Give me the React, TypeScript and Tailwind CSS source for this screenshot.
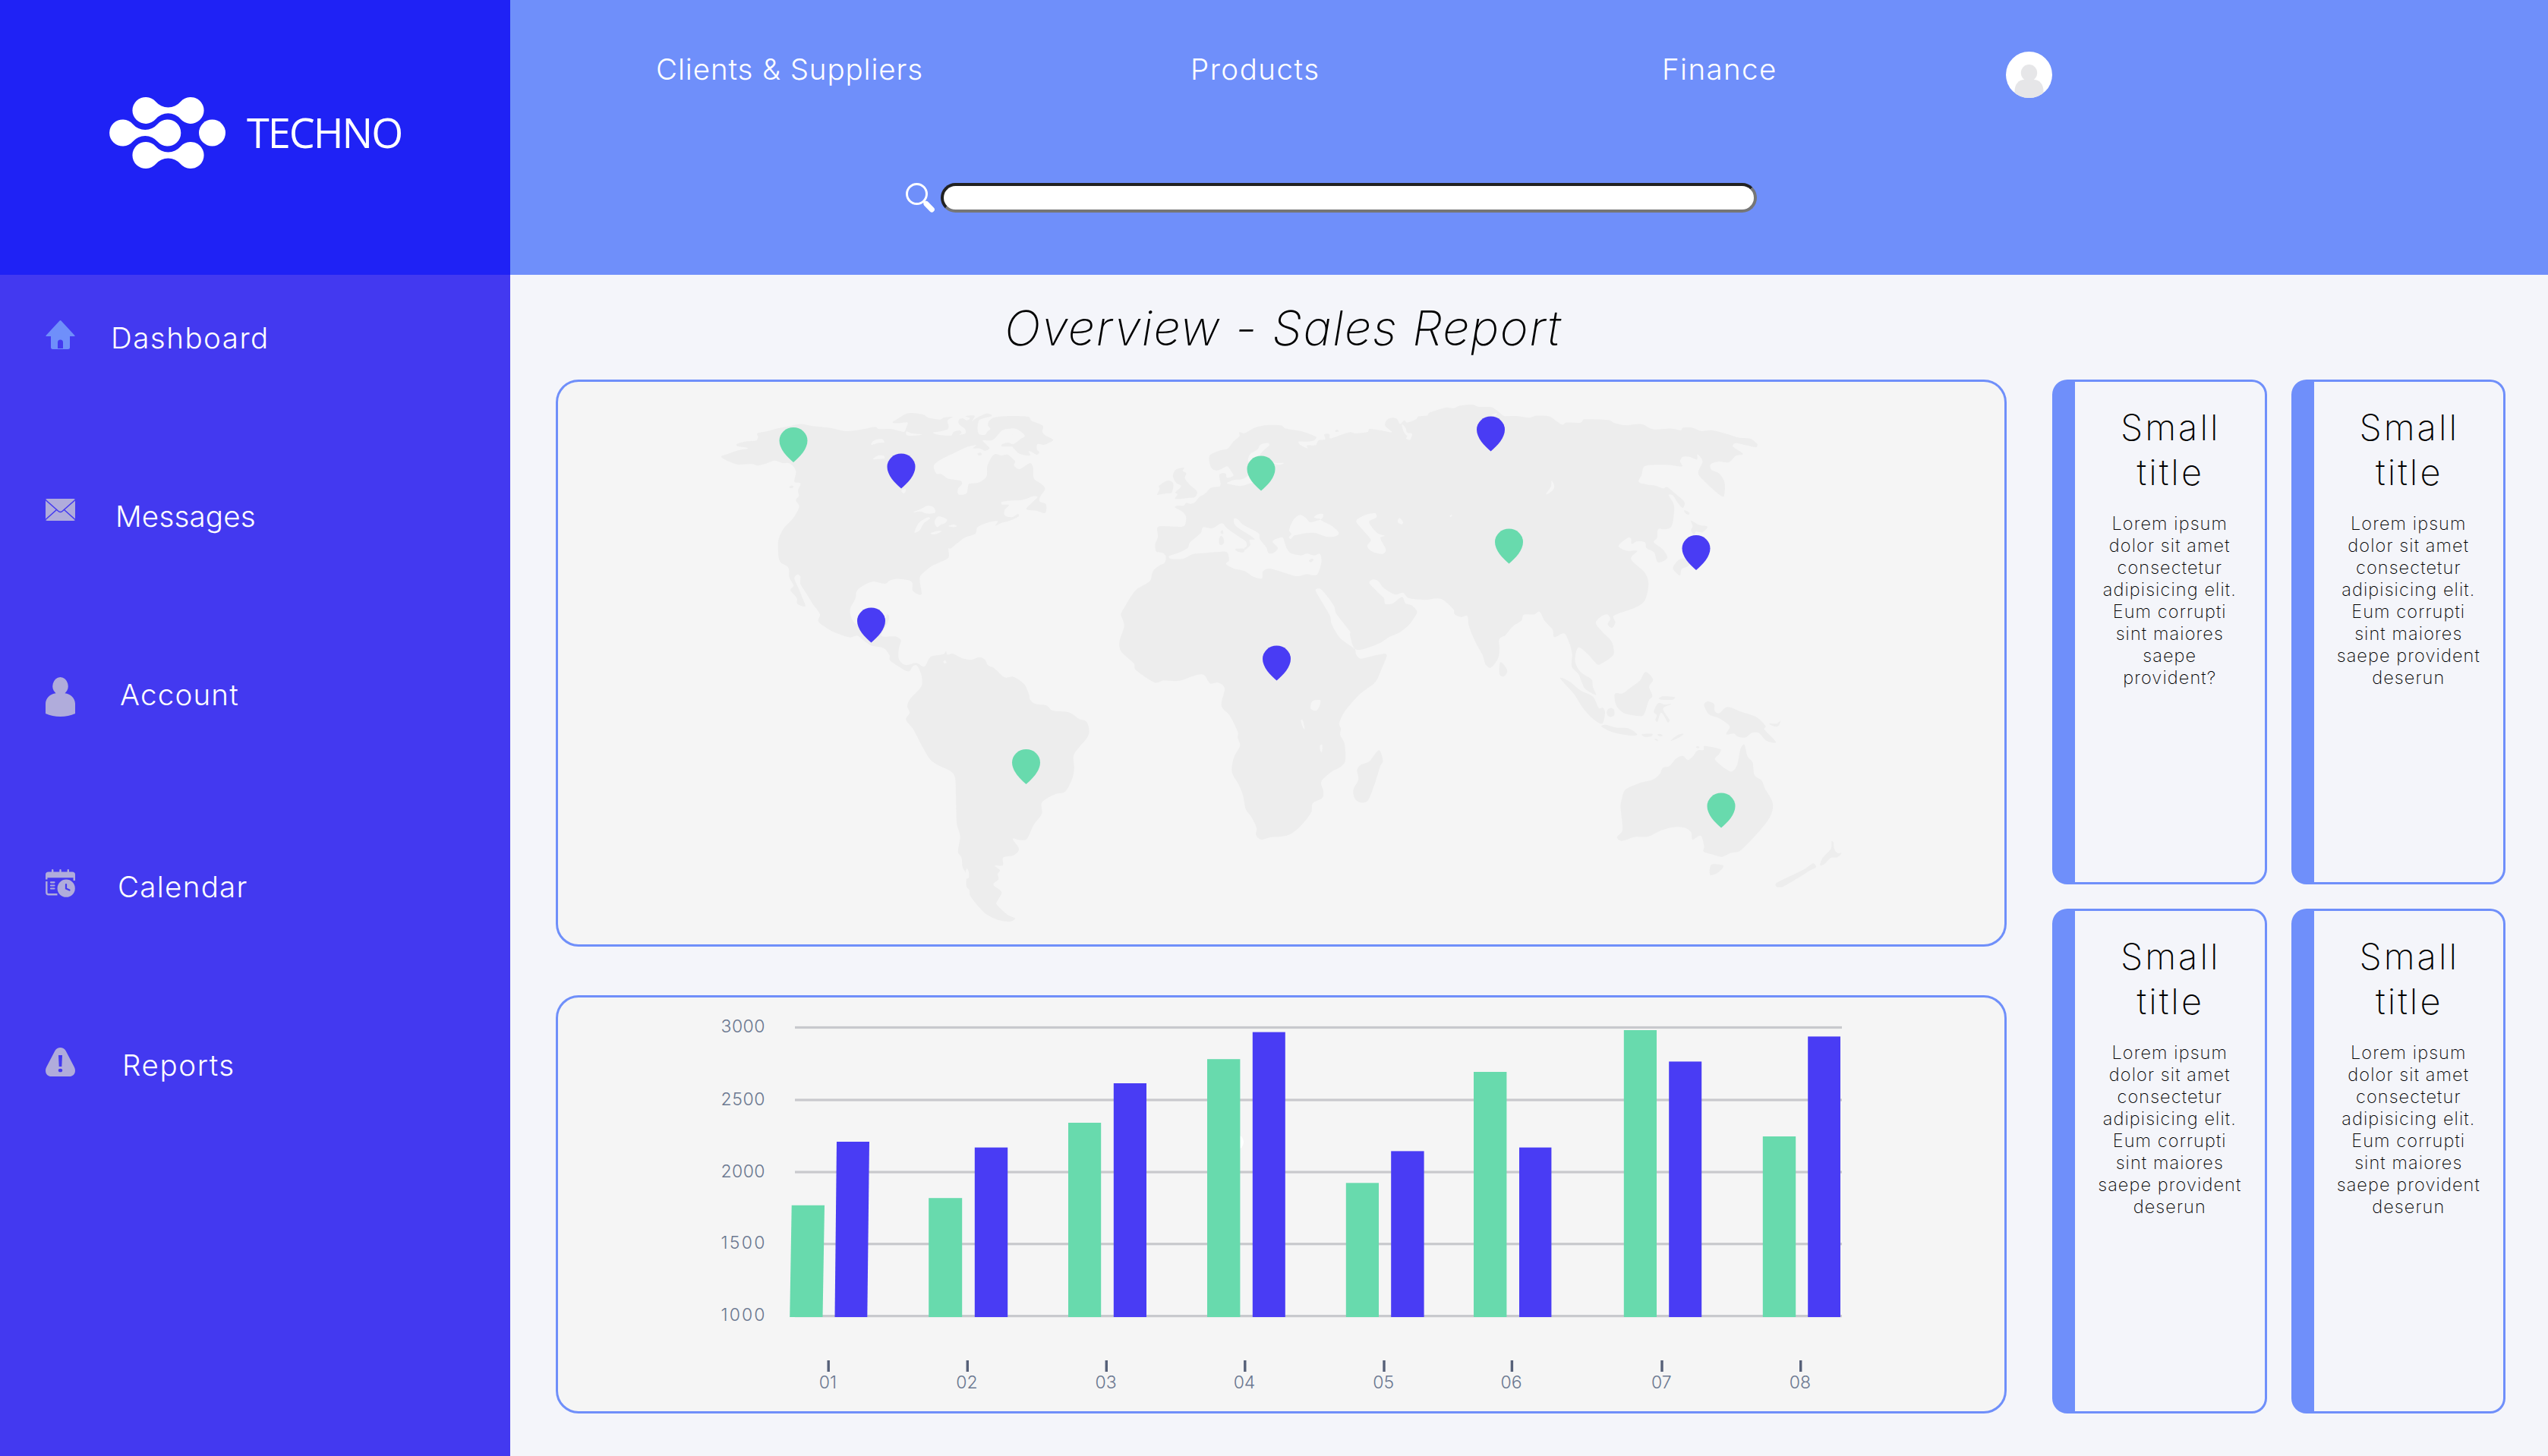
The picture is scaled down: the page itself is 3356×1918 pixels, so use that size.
type Pt = [number, number];

/** Turns a flat "x,y x,y" list into a closed, softly rounded outline. */
function outline(src: string): string {
  const p = src.trim().split(/\s+/).map((s) => s.split(",").map(Number) as Pt);
  const n = p.length;
  const f = (v: number) => v.toFixed(1);
  // Control vector parallel to from→to, never longer than a third of the segment.
  const handle = (from: Pt, to: Pt, seg: number): Pt => {
    const dx = to[0] - from[0];
    const dy = to[1] - from[1];
    const len = Math.hypot(dx, dy) || 1;
    const m = Math.min(len * 0.16, seg * 0.33) / len;
    return [dx * m, dy * m];
  };
  let d = `M${p[0][0]} ${p[0][1]}`;
  for (let i = 0; i < n; i++) {
    const a = p[(i - 1 + n) % n];
    const b = p[i];
    const c = p[(i + 1) % n];
    const e = p[(i + 2) % n];
    const seg = Math.hypot(c[0] - b[0], c[1] - b[1]);
    if (seg > 400) {
      d += `L${c[0]} ${c[1]}`;
      continue;
    }
    const longBefore = Math.hypot(b[0] - a[0], b[1] - a[1]) > 400;
    const longAfter = Math.hypot(e[0] - c[0], e[1] - c[1]) > 400;
    const h1 = longBefore ? ([0, 0] as Pt) : handle(a, c, seg);
    const h2 = longAfter ? ([0, 0] as Pt) : handle(b, e, seg);
    d += `C${f(b[0] + h1[0])} ${f(b[1] + h1[1])} ${f(c[0] - h2[0])} ${f(c[1] - h2[1])} ${c[0]} ${c[1]}`;
  }
  return d + "Z";
}

type Region = { transform: string; land: string[]; water: string[]; isles: string[] };

const REGIONS: Region[] = [
  {
    transform: "translate(900 500) scale(.3954 .4719)",
    land: [
      "126,215 150,207 180,198 215,193 212,190 180,186 178,180 205,173 243,170 249,160 246,150 280,144 315,136 350,131 390,124 430,130 490,135 540,144 590,140 640,132 650,138 690,138 735,146 742,135 747,120 720,122 697,120 710,112 750,94 800,98 815,106 855,112 868,106 897,104 880,114 884,130 880,139 860,144 832,148 850,154 893,156 900,146 920,142 927,148 920,154 940,150 938,138 918,124 918,112 930,108 945,114 955,108 940,102 970,101 962,116 975,108 1010,95 1028,101 1000,108 985,114 980,135 985,152 1005,154 1013,145 1023,138 1015,128 1018,116 1035,106 1075,102 1150,104 1160,115 1198,129 1196,145 1205,155 1232,168 1215,178 1200,182 1180,180 1178,195 1186,203 1178,210 1160,202 1150,200 1155,212 1120,207 1100,192 1095,187 1062,187 1060,182 1080,176 1100,180 1125,165 1137,156 1110,138 1085,137 1062,142 1040,162 1025,170 997,170 1010,182 1020,192 1005,199 985,192 965,192 975,183 940,190 900,206 860,222 835,240 843,262 860,264 880,276 925,283 928,292 915,305 916,320 935,321 945,315 950,293 960,290 985,287 1010,270 1013,240 1035,209 1060,212 1080,210 1105,228 1102,240 1120,250 1155,233 1165,245 1168,276 1190,290 1205,305 1190,325 1187,340 1208,348 1206,372 1180,367 1143,362 1160,345 1180,328 1165,326 1130,336 1090,338 1060,342 1062,349 1085,350 1070,365 1072,380 1095,384 1115,375 1117,382 1090,393 1060,400 1040,408 1047,395 1020,398 980,412 973,430 940,440 915,455 890,472 883,472 883,497 850,512 825,522 790,548 788,565 793,600 765,590 763,568 750,560 715,556 690,560 672,570 630,564 600,575 578,590 573,612 556,640 560,665 575,683 620,700 655,695 668,690 675,665 680,655 686,662 680,680 660,715 705,717 725,728 718,750 718,780 740,797 775,791 803,801 822,775 845,770 868,766 875,758 880,768 897,765 930,778 960,782 985,775 1005,782 1015,798 1035,805 1070,831 1100,830 1135,850 1152,880 1155,893 1172,905 1210,910 1230,924 1285,929 1320,948 1343,955 1352,980 1345,1000 1320,1025 1300,1050 1302,1085 1295,1115 1272,1150 1240,1157 1195,1180 1194,1212 1168,1242 1145,1282 1125,1286 1097,1282 1118,1310 1100,1328 1066,1334 1064,1356 1038,1357 1055,1370 1047,1380 1050,1395 1033,1410 1060,1430 1050,1450 1043,1464 1080,1494 1105,1504 1090,1513 1050,1509 1010,1493 985,1473 955,1440 953,1425 943,1415 942,1382 930,1360 927,1335 915,1318 922,1275 911,1240 908,1160 905,1110 890,1093 845,1075 820,1058 790,1015 765,975 742,950 754,930 746,912 755,892 793,856 793,825 778,798 765,800 750,815 715,800 688,783 687,770 668,750 625,742 600,728 580,715 555,720 510,708 480,695 450,675 455,655 430,625 410,597 390,570 390,550 380,544 370,555 385,585 397,610 406,633 380,626 378,610 357,588 367,575 353,552 350,525 322,508 316,480 317,447 335,415 365,388 386,355 375,337 385,325 382,310 390,290 370,285 375,255 355,234 330,233 305,226 280,233 248,240 230,236 180,237 150,228",
    ],
    water: [
      "626,182 635,170 660,166 670,175 650,177",
      "632,222 650,212 668,213 670,220 650,222",
      "743,145 760,150 795,153 780,156 745,156",
      "766,370 790,362 815,352 835,358 838,372 810,374 790,368",
      "770,427 785,400 815,384 822,388 800,402 788,420",
      "837,397 850,382 878,390 873,400 858,405 845,412",
      "883,409 900,405 911,409 900,412",
      "823,430 845,423 862,423 840,432",
      "726,310 740,305 740,313 733,318",
      "866,788 872,784 877,790 870,792",
      "1095,156 1105,151 1113,155 1105,160",
      "938,1385 944,1365 951,1375 951,1390 943,1393",
    ],
    isles: ["352,301 360,296 368,298 362,303", "980,207 990,204 994,210 985,212"],
  },
  {
    transform: "translate(1440 500) scale(.3827 .4719)",
    land: [
      "281,357 290,352 312,352 320,344 335,347 350,342 365,328 385,318 405,302 435,298 438,290 434,265 455,262 460,274 480,270 482,266 468,248 460,242 425,254 405,245 400,213 435,198 463,193 480,175 503,158 503,147 520,150 560,133 600,127 648,128 660,136 720,145 767,160 760,170 735,173 707,173 712,182 738,192 735,184 765,183 775,170 798,167 795,153 812,152 815,164 850,155 885,147 900,150 945,146 950,138 990,142 1028,147 1005,130 1008,115 1025,107 1045,110 1056,124 1070,114 1080,120 1112,110 1118,103 1150,100 1155,93 1215,78 1240,80 1260,73 1305,70 1325,76 1370,77 1392,88 1415,102 1450,102 1490,108 1525,102 1568,104 1568,678 1555,668 1535,648 1515,654 1480,656 1472,670 1440,690 1420,712 1397,725 1398,750 1393,778 1368,804 1350,795 1340,770 1320,740 1305,715 1292,685 1287,660 1265,663 1243,655 1240,642 1195,612 1140,615 1085,610 1065,595 1040,600 1000,582 980,562 962,558 950,568 975,590 1000,610 1005,626 1030,625 1062,607 1075,625 1095,630 1114,648 1100,670 1080,690 1050,708 1020,718 980,738 905,754 883,712 885,705 835,652 830,635 805,605 780,584 765,588 790,625 815,660 820,682 850,722 900,752 905,768 920,779 960,772 1005,765 1010,772 990,812 970,845 915,880 865,927 846,960 852,975 850,992 865,1018 867,1065 850,1082 820,1095 785,1122 792,1150 788,1168 755,1183 750,1208 715,1245 670,1272 610,1278 578,1284 560,1272 562,1252 545,1222 525,1200 515,1160 500,1130 477,1095 484,1055 505,1022 497,1000 498,985 470,938 441,910 452,862 430,846 402,848 380,824 350,826 295,841 240,840 212,846 145,810 140,793 95,758 90,732 106,690 102,672 95,655 110,632 130,605 150,585 195,562 205,535 225,520 245,512 250,495 240,484 217,480 213,460 222,440 220,415 230,409 305,411 316,405 319,382 305,368",
      "280,255 290,249 312,246 308,255 320,262 315,275 330,292 357,313 350,328 330,330 282,333 290,320 282,315 302,298 285,288 274,270",
      "220,320 228,305 225,298 255,282 275,290 270,315 250,318 222,322",
      "985,1035 997,1065 988,1078 970,1125 945,1175 920,1181 900,1170 895,1145 912,1117 908,1090 920,1076 950,1066 965,1050",
      "1400,790 1415,798 1425,815 1412,829 1398,822",
      "832,144 838,140 845,144 838,146",
    ],
    water: [
      "260,493 290,485 325,470 332,455 370,428 378,412 410,415 442,401 460,415 500,438 525,452 528,465 520,470 523,475 540,462 538,448 555,446 545,438 500,415 485,402 485,388 497,390 515,405 570,430 573,445 595,468 603,484 620,484 635,470 617,452 640,442 653,442 665,470 680,485 715,491 735,486 760,491 780,487 785,510 772,543 755,546 735,543 700,549 660,540 620,530 600,528 583,536 580,555 550,550 520,534 485,528 457,515 467,505 460,482 430,481 370,485 340,488 310,500 265,500",
      "674,420 690,390 710,378 730,385 745,398 765,395 783,390 760,385 770,377 790,375 790,385 783,392 820,408 845,428 830,438 800,438 760,428 715,431 690,436 680,445 673,440 682,432",
      "905,395 935,378 970,373 974,385 950,395 955,408 980,430 1003,436 988,443 1007,475 995,487 960,480 943,465 955,447 930,422",
      "1048,392 1056,387 1066,398 1062,404 1050,400",
      "1227,380 1235,378 1230,384",
      "532,225 540,208 565,195 575,182 600,177 606,183 590,195 575,208 575,218 620,232 655,233 640,238 620,237 600,250 560,285 540,290 505,297 460,290 465,286 485,280 510,278 530,270 545,255 540,235",
      "1062,125 1075,135 1080,148 1097,152 1090,168 1077,165 1080,158 1068,145",
      "1370,100 1388,94 1385,100",
      "748,910 755,897 780,895 780,908 768,924 750,920",
      "714,952 720,950 728,975 722,972",
      "780,1022 788,1020 787,1040 781,1035",
    ],
    isles: [
      "433,445 440,436 449,445 448,458 435,461",
      "438,425 445,420 447,430 440,430",
      "488,473 520,472 517,482 500,481",
      "742,506 752,500 758,503 750,510",
    ],
  },
  {
    transform: "translate(1980 500) scale(.4337 .4847)",
    land: [
      "0,100 40,99 80,104 100,98 140,100 160,112 180,123 190,117 235,117 245,108 320,110 335,117 370,124 420,121 455,135 510,133 540,138 545,131 575,131 600,140 635,138 680,148 715,158 750,161 771,175 768,184 735,178 705,173 697,182 728,202 705,208 685,225 655,223 630,230 632,245 655,255 672,280 670,317 655,312 615,280 592,255 605,222 590,203 588,217 565,210 545,210 537,222 543,236 500,232 430,235 420,260 411,278 435,285 460,288 485,296 497,292 520,308 550,333 545,349 530,335 515,315 502,314 518,340 517,375 510,400 490,407 470,407 467,430 457,442 485,462 498,485 470,497 458,470 435,458 430,442 405,440 390,447 388,432 378,430 350,452 375,465 407,466 388,488 430,525 441,555 430,600 400,620 335,642 340,660 330,675 317,665 325,650 315,638 295,645 281,662 300,685 325,707 334,725 333,750 290,775 275,765 255,745 228,728 218,765 235,795 268,815 272,835 281,857 250,842 238,822 228,800 208,780 209,745 200,715 185,690 155,700 150,680 125,655 110,630 95,638 62,639 55,655 30,670 10,690 0,697",
      "550,355 565,362 562,368 552,362",
      "570,383 595,395 620,400 605,415 585,413 580,422 570,410 575,398",
      "515,512 530,492 548,486 565,500 560,508 542,515 537,532 525,525",
      "173,812 200,820 235,845 272,862 290,893 302,892 309,905 300,935 270,920 240,890 215,855",
      "298,943 310,938 345,946 380,948 407,965 380,967 330,958",
      "314,905 318,896 326,893 335,896 338,905 335,914 326,917 318,914",
      "338,855 345,852 362,853 385,838 415,818 432,795 455,815 443,835 453,860 442,872 430,905 420,915 370,908 350,895 340,878",
      "470,880 490,883 510,882 485,895 505,925 500,932 480,905 468,930 462,925 466,912 457,903",
      "472,866 485,861 521,863 515,870 480,870",
      "421,964 453,963 450,969 430,971",
      "468,965 476,963 484,967 476,970",
      "508,982 530,966 548,963 535,972",
      "458,977 466,977 470,983",
      "585,999 591,996 596,1000 590,1002",
      "610,885 620,875 640,882 642,900 655,907 680,890 720,902 770,918 797,942 792,950 828,985 800,982 775,960 755,960 735,973 712,970 700,962 677,964 688,945 680,935 655,920 625,910",
      "808,935 830,935 842,928 835,942 820,942",
      "345,1244 362,1225 356,1160 360,1140 370,1115 410,1098 455,1087 475,1072 485,1055 505,1050 525,1030 545,1023 560,1034 575,1025 590,1008 608,1007 610,996 660,1005 655,1018 643,1033 690,1065 710,1048 720,1005 732,992 742,1025 757,1040 763,1075 785,1090 795,1112 818,1150 812,1185 780,1225 720,1280 690,1287 665,1297 640,1292 608,1283 610,1270 600,1240 575,1250 570,1230 550,1218 520,1216 480,1225 440,1242 400,1243 360,1254",
      "627,1330 635,1317 668,1321 655,1338 630,1347",
      "827,1370 870,1350 915,1330 940,1315 950,1325 930,1335 900,1352 850,1378 832,1379",
      "962,1320 970,1300 995,1275 997,1255 1003,1258 1005,1275 1015,1287 1027,1287 1015,1298 995,1300 975,1317",
    ],
    water: ["130,312 145,290 147,275 155,290 148,303"],
    isles: [],
  },
];

const GREEN = "#68daad";
const VIOLET = "#493cf4";

const PINS: [number, number, string][] = [
  [1045, 609, GREEN],
  [1187, 643.5, VIOLET],
  [1147.5, 846.5, VIOLET],
  [1351.5, 1033, GREEN],
  [1661, 646.5, GREEN],
  [1963.5, 594.5, VIOLET],
  [1987.5, 742.5, GREEN],
  [1681.5, 896.5, VIOLET],
  [2234, 751, VIOLET],
  [2267, 1090.5, GREEN],
];

function WorldMap() {
  return (
    <svg viewBox="735 503 1905 741" className="block h-full w-full">
      {REGIONS.map((r, i) => (
        <g key={i} transform={r.transform}>
          <path d={r.land.map(outline).join("")} fill="#ededed" />
          <path d={r.water.map(outline).join("")} fill="#f5f5f5" />
          <path d={r.isles.map(outline).join("")} fill="#ededed" />
        </g>
      ))}
      {PINS.map(([x, y, c]) => (
        <path
          key={`${x}`}
          transform={`translate(${x} ${y})`}
          d="M0 0C-9-7.500-18.500-18-18.500-28.500A18.500 17.500 0 0 1 18.500-28.500C18.500-18 9-7.500 0 0Z"
          fill={c}
        />
      ))}
    </svg>
  );
}

const BARS: [number, number, number, string][] = [
  [1223.2, 1267.2, 1578.2, GREEN],
  [1283.8, 1327.2, 1511.6, VIOLET],
  [1407, 1450.2, 1479, GREEN],
  [1466.8, 1510, 1427, VIOLET],
  [1590, 1633.4, 1395.2, GREEN],
  [1649.8, 1692.8, 1359.6, VIOLET],
  [1772.8, 1816, 1558.3, GREEN],
  [1832.2, 1875.6, 1516.4, VIOLET],
  [1941, 1984.4, 1412, GREEN],
  [2001, 2043.4, 1511.6, VIOLET],
  [2138.8, 2182, 1357, GREEN],
  [2198.2, 2241.2, 1398.4, VIOLET],
  [2321.8, 2365.2, 1497, GREEN],
  [2381.2, 2424, 1365.4, VIOLET],
];

const LEVELS: [string, number][] = [
  ["3000", 1353.5],
  ["2500", 1449],
  ["2000", 1544],
  ["1500", 1638.7],
  ["1000", 1733.6],
];

const TICKS: [string, number][] = [
  ["01", 1091.2],
  ["02", 1274.3],
  ["03", 1457.3],
  ["04", 1639.8],
  ["05", 1823],
  ["06", 1991.4],
  ["07", 2189],
  ["08", 2371.7],
];

function SalesChart() {
  return (
    <svg viewBox="735 1314 1905 545" className="block h-full w-full">
      {LEVELS.map(([t, y]) => (
        <g key={t}>
          <rect x="1047" y={y - 1.6} width="1379" height="3.2" fill="#c8c9cd" />
          <text x="949.5" y={y + 6.7} fontSize="23" fontWeight="350" textLength="58" fill="#6b7890" fontFamily="Inter, sans-serif">
            {t}
          </text>
        </g>
      ))}
      <ellipse cx="1630" cy="1504.500" rx="8" ry="9.500" fill="#fff" />
      <path d="M1042.700 1587.700H1086L1083.500 1735H1040.200Z" fill={GREEN} />
      <path d="M1102 1504H1145L1142.300 1735H1099.500Z" fill={VIOLET} />
      {BARS.map(([l, r, t, c]) => (
        <rect key={l} x={l} y={t} width={r - l} height={1735 - t} fill={c} />
      ))}
      {TICKS.map(([t, x]) => (
        <g key={t}>
          <rect x={x - 1.7} y="1792" width="3.400" height="15" fill="#566078" />
          <text x={x - 0.8} y="1829" fontSize="23" fontWeight="350" textAnchor="middle" fill="#6b7890" fontFamily="Inter, sans-serif">
            {t}
          </text>
        </g>
      ))}
    </svg>
  );
}

const DUMBBELL =
  "M13.200-11.400A21.500 21.500 0 0 0 45.800-11.400A17.500 17.500 0 1 1 45.800 11.400A21.500 21.500 0 0 0 13.200 11.400A17.500 17.500 0 1 1 13.200-11.400Z";

function Logo() {
  return (
    <svg viewBox="144 127 154 96" className="h-[96px] w-[154px]" fill="#fff">
      <path d={DUMBBELL} transform="translate(192 145.400)" />
      <path d={DUMBBELL} transform="translate(161.700 175)" />
      <path d={DUMBBELL} transform="translate(192 204.500)" />
      <circle cx="279.500" cy="175" r="17.500" />
    </svg>
  );
}

function HomeIcon() {
  return (
    <svg viewBox="0 0 39 38" className="h-[38px] w-[39px]" fill="#6f8ffa">
      <path
        d="M18.500.6Q19.500-.4 20.500.6L38.500 20Q39 21 38 21H32V35.500Q32 38 29.500 38H9.500Q7 38 7 35.500V21H1Q0 21 .5 20ZM16 37H23V29A3.500 3.500 0 0 0 16 29Z"
        fillRule="evenodd"
      />
    </svg>
  );
}

function MailIcon() {
  return (
    <svg viewBox="0 0 39 29" className="h-[29px] w-[39px]">
      <rect width="39" height="29" rx="2" fill="#b0acdb" />
      <path
        d="M0 1.500L17 16.500Q19.500 18.500 22 16.500L39 1.500M0 27.500L14.500 14.500M39 27.500L24.500 14.500"
        fill="none"
        stroke="#4339f0"
        strokeWidth="1.600"
      />
    </svg>
  );
}

function UserIcon() {
  return (
    <svg viewBox="0 0 39 52" className="h-[52px] w-[39px]" fill="#b0acdb">
      <path d="M19.500 0A11.500 12 0 0 1 25.500 21.200C33 22 39 28 39 35V48Q30 52 19.500 52T0 48V35C0 28 6 22 13.500 21.200A11.500 12 0 0 1 19.500 0Z" />
    </svg>
  );
}

function CalendarIcon() {
  return (
    <svg viewBox="0 0 39 37" className="h-[37px] w-[39px]">
      <path
        d="M0 13.500V7Q0 3.500 4 3.500H8V1.200A1.200 1.200 0 0 1 10.400 1.200V3.500H18.300V1.200A1.200 1.200 0 0 1 20.700 1.200V3.500H28.600V1.200A1.200 1.200 0 0 1 31 1.200V3.500H35Q39 3.500 39 7V15H36.500V11.300H2.500V13.500Z"
        fill="#b0acdb"
      />
      <path d="M1.300 16V30.500Q1.300 33.300 4 33.300H15.500" fill="none" stroke="#b0acdb" strokeWidth="2.400" />
      <path d="M7 17.300H11.500M7 21.500H11.500M7 25.500H11.500" fill="none" stroke="#b0acdb" strokeWidth="2.200" strokeLinecap="round" />
      <circle cx="27.200" cy="25.200" r="11.600" fill="#b0acdb" />
      <path d="M27 20V25.500L31.500 27.500" fill="none" stroke="#4339f0" strokeWidth="2.200" strokeLinecap="round" />
    </svg>
  );
}

function AlertIcon() {
  return (
    <svg viewBox="0 0 39 38" className="h-[38px] w-[39px]">
      <path d="M12.500 4C15.500-1.300 23.500-1.300 26.500 4L37.500 25C41 31.500 38 38 31 38H8C1 38-2 31.500 1.500 25Z" fill="#b0acdb" />
      <path d="M17 10H22L21.300 25H17.700Z" fill="#4339f0" />
      <ellipse cx="19.500" cy="30" rx="2.700" ry="2.300" fill="#4339f0" />
    </svg>
  );
}

const MENU = [
  { icon: <HomeIcon />, label: "Dashboard", box: "mt-[60px]", text: "ml-[47px] tracking-[1.5px]" },
  { icon: <MailIcon />, label: "Messages", box: "mt-[187px]", text: "ml-[53px] tracking-[0.2px]" },
  { icon: <UserIcon />, label: "Account", box: "mt-[187px]", text: "ml-[59px] tracking-[1.2px]" },
  { icon: <CalendarIcon />, label: "Calendar", box: "mt-[205px]", text: "ml-[56px] tracking-[1.3px]" },
  { icon: <AlertIcon />, label: "Reports", box: "mt-[187px]", text: "ml-[62px] tracking-[1.6px]" },
];

const SHORT = ["Lorem ipsum", "dolor sit amet", "consectetur", "adipisicing elit.", "Eum corrupti", "sint maiores"];
const CARDS = [
  [...SHORT, "saepe", "provident?"],
  [...SHORT, "saepe provident", "deserun"],
  [...SHORT, "saepe provident", "deserun"],
  [...SHORT, "saepe provident", "deserun"],
];

function InfoCard({ lines }: { lines: string[] }) {
  return (
    <article className="rounded-[20px] border-[3px] border-l-[30px] border-[#6f8ffa] pt-[30px] text-center text-black">
      <h2 className="pl-[2px] text-[47px] leading-[59px] font-extralight tracking-[3px]">
        Small
        <br />
        title
      </h2>
      <p className="mt-[24px] text-[23.5px] leading-[29px] font-[150] tracking-[1.1px]">
        {lines.map((l) => (
          <span key={l} className="block whitespace-nowrap">
            {l}
          </span>
        ))}
      </p>
    </article>
  );
}

export default function App() {
  return (
    <div className="flex h-[1918px] w-[3356px] overflow-hidden bg-[#f4f5fa] font-['Inter',sans-serif]">
      <aside className="flex w-[672px] shrink-0 flex-col bg-[#4339f0]">
        <div className="flex h-[362px] items-center bg-[#1f22f5] pb-[12px] pl-[144px]">
          <Logo />
          <span className="ml-[27px] pb-[2px] font-['Open_Sans',sans-serif] text-[54px] leading-[60px] tracking-[-2px] text-white">
            TECHNO
          </span>
        </div>
        <nav>
          {MENU.map((m) => (
            <div key={m.label} className={`flex h-[48px] items-start pl-[60px] ${m.box}`}>
              {m.icon}
              <span className={`text-[38.5px] leading-[46px] font-[260] text-white ${m.text}`}>{m.label}</span>
            </div>
          ))}
        </nav>
      </aside>
      <div className="flex flex-1 flex-col">
        <header className="flex h-[362px] flex-col bg-[#6f8ffa]">
          <nav className="flex h-[129px] items-start pt-[68px] text-[38.5px] leading-[46px] font-[260] whitespace-nowrap text-white">
            <span className="ml-[192px] w-[704px] tracking-[0.9px]">Clients &amp; Suppliers</span>
            <span className="w-[621px] tracking-[1.5px]">Products</span>
            <span className="w-[453px] tracking-[1.4px]">Finance</span>
            <svg viewBox="0 0 61 61" className="h-[61px] w-[61px]">
              <clipPath id="disc">
                <circle cx="30.500" cy="30.500" r="30.500" />
              </clipPath>
              <g clipPath="url(#disc)">
                <rect width="61" height="61" fill="#fff" />
                <ellipse cx="30.500" cy="28" rx="10.700" ry="11" fill="#e6e6e8" />
                <path d="M11.500 61V52C11.500 43 17 37 24 37H37C44 37 49.500 43 49.500 52V61Z" fill="#e6e6e8" />
              </g>
            </svg>
          </nav>
          <div className="mt-[112px] flex items-center pl-[521px]">
            <svg viewBox="0 0 38 39" className="h-[39px] w-[38px]">
              <circle cx="14.500" cy="14.500" r="13" fill="none" stroke="#fff" strokeWidth="3" />
              <path d="M27 27.500L34.300 35" stroke="#fff" strokeWidth="7" strokeLinecap="round" />
              <path d="M23.500 24L27 27.500" stroke="#fff" strokeWidth="3.500" />
            </svg>
            <div className="ml-[8px] h-[39px] w-[1075px] rounded-[20px] border-4 border-t-[#222] border-r-[#767676] border-b-[#767676] border-l-[#222] bg-white" />
          </div>
        </header>
        <main className="flex flex-1 pl-[60px]">
          <section className="w-[1911px]">
            <h1 className="h-[138px] pt-[32px] pl-[591px] text-[63px] leading-[76px] font-extralight tracking-[1.5px] whitespace-nowrap text-black italic">
              Overview - Sales Report
            </h1>
            <div className="h-[747px] rounded-[30px] border-[3px] border-[#6f8ffa] bg-[#f5f5f5]">
              <WorldMap />
            </div>
            <div className="mt-[64px] h-[551px] rounded-[30px] border-[3px] border-[#6f8ffa] bg-[#f5f5f5]">
              <SalesChart />
            </div>
          </section>
          <section className="mt-[138px] ml-[60px] grid h-[1362px] w-[597px] grid-cols-2 grid-rows-2 gap-[32px]">
            {CARDS.map((lines, i) => (
              <InfoCard key={i} lines={lines} />
            ))}
          </section>
        </main>
      </div>
    </div>
  );
}
